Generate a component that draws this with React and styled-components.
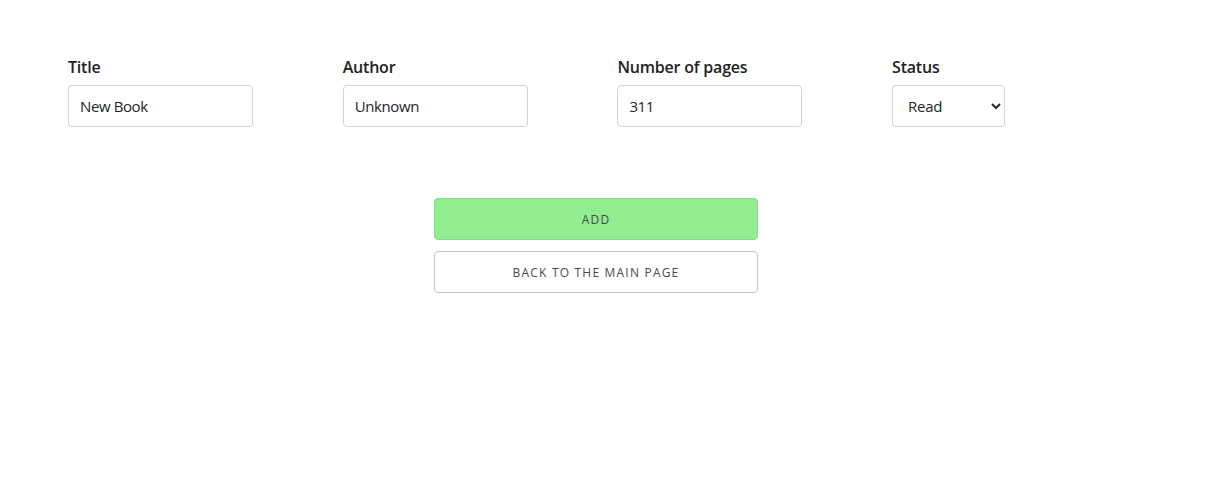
import React from "react";
import styled, { createGlobalStyle } from "styled-components";

const Global = createGlobalStyle`
  body {
    margin: 0;
    background: #fff;
    font-family: "Open Sans", "Noto Sans", sans-serif;
    color: #212529;
  }
`;

const Page = styled.div`
  padding: 56px 0 0 68px;
  width: 1215px;
  box-sizing: border-box;
`;

const FieldsRow = styled.div`
  display: grid;
  grid-template-columns: repeat(4, 274.7px);
`;

const Field = styled.div`
  display: flex;
  flex-direction: column;
  gap: 7px;
`;

const Label = styled.label`
  font-size: 16px;
  font-weight: 600;
  line-height: 22px;
  color: #222;
  letter-spacing: -0.2px;
`;

const Input = styled.input`
  box-sizing: border-box;
  width: 185px;
  height: 42px;
  padding: 0 11px;
  border: 1px solid #ced4da;
  border-radius: 4px;
  font-family: inherit;
  font-size: 15px;
  color: #212529;
  letter-spacing: -0.4px;
  outline: none;
`;

const Select = styled.select`
  box-sizing: border-box;
  width: 113px;
  height: 42px;
  padding: 0 8px 0 11px;
  border: 1px solid #ced4da;
  border-radius: 4px;
  font-family: inherit;
  font-size: 15px;
  letter-spacing: -0.3px;
  color: #212529;
  background: #fff;
  outline: none;
`;

const Actions = styled.div`
  display: flex;
  flex-direction: column;
  gap: 11px;
  width: 324px;
  margin: 71px 0 0 366px;
`;

const Button = styled.button`
  box-sizing: border-box;
  height: 42px;
  width: 100%;
  border-radius: 4px;
  border: 1px solid ${(p) => (p.$primary ? "#86d986" : "#c6c6c6")};
  background: ${(p) => (p.$primary ? "#90ee90" : "#fff")};
  color: #4a4a4a;
  font-family: inherit;
  font-size: 12px;
  letter-spacing: 1.2px;
  text-transform: uppercase;
  cursor: pointer;
`;

export default function App() {
  return (
    <>
      <Global />
      <Page>
        <FieldsRow>
          <Field>
            <Label>Title</Label>
            <Input defaultValue="New Book" />
          </Field>
          <Field>
            <Label>Author</Label>
            <Input defaultValue="Unknown" />
          </Field>
          <Field>
            <Label>Number of pages</Label>
            <Input defaultValue="311" />
          </Field>
          <Field>
            <Label>Status</Label>
            <Select defaultValue="Read">
              <option>Read</option>
              <option>Not read</option>
            </Select>
          </Field>
        </FieldsRow>
        <Actions>
          <Button $primary>Add</Button>
          <Button>Back to the main page</Button>
        </Actions>
      </Page>
    </>
  );
}
